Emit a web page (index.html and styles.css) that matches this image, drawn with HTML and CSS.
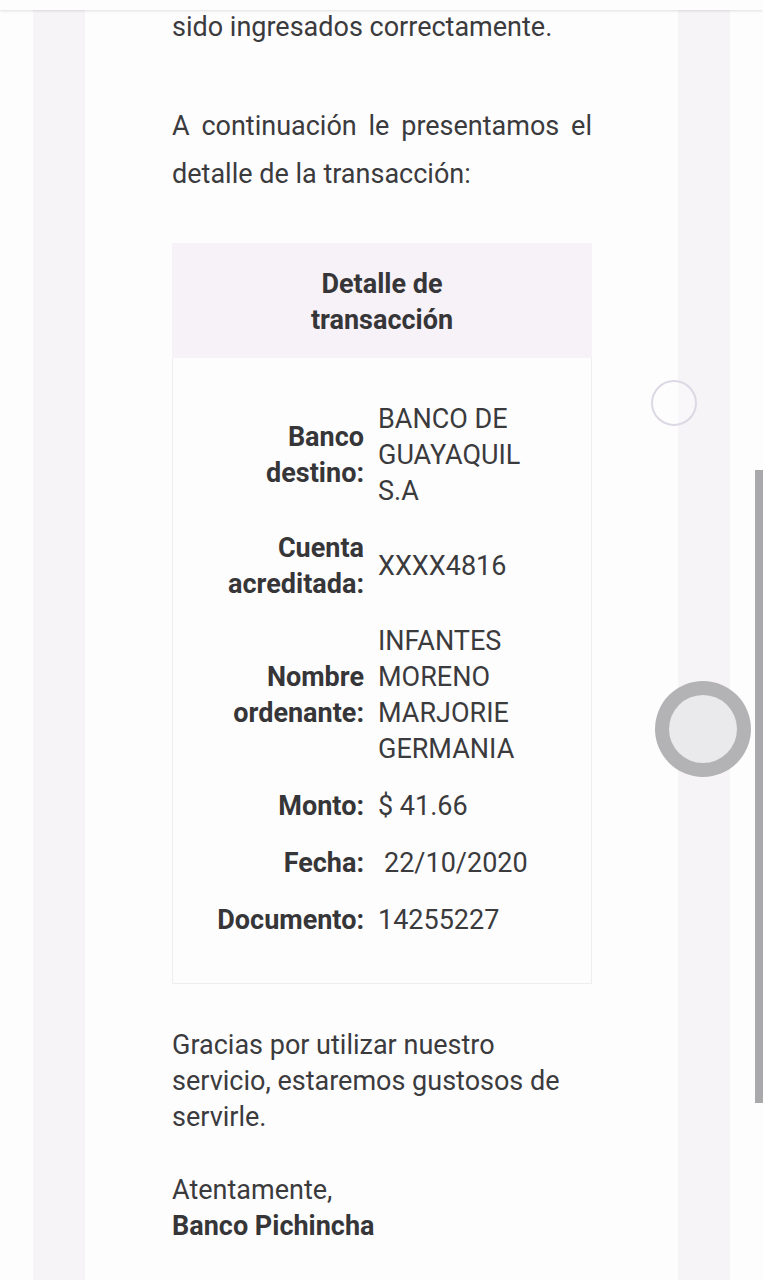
FILE: index.html
```html
<!DOCTYPE html>
<html lang="es">
<head>
<meta charset="utf-8">
<title>Detalle de transacción</title>
<link rel="stylesheet" href="styles.css">
</head>
<body>
<div class="topbar"></div>
<div class="outer">
  <div class="card">
    <p class="intro">sido ingresados correctamente.</p>
    <p class="lead">A continuación le presentamos el detalle de la transacción:</p>
    <div class="detail">
      <div class="detail-head">Detalle de<br>transacción</div>
      <div class="detail-body">
        <div class="row"><div class="lbl">Banco destino:</div><div class="val">BANCO DE GUAYAQUIL S.A</div></div>
        <div class="row"><div class="lbl">Cuenta acreditada:</div><div class="val">XXXX4816</div></div>
        <div class="row"><div class="lbl">Nombre ordenante:</div><div class="val">INFANTES MORENO MARJORIE GERMANIA</div></div>
        <div class="row"><div class="lbl">Monto:</div><div class="val">$ 41.66</div></div>
        <div class="row"><div class="lbl">Fecha:</div><div class="val shift">22/10/2020</div></div>
        <div class="row"><div class="lbl">Documento:</div><div class="val">14255227</div></div>
      </div>
    </div>
    <p class="thanks">Gracias por utilizar nuestro servicio, estaremos gustosos de servirle.</p>
    <p class="sign">Atentamente,<br><b>Banco Pichincha</b></p>
  </div>
</div>
<div class="ring-small"></div>
<div class="ring-big"><div class="ring-inner"></div></div>
<div class="scrollbar"></div>
</body>
</html>
```

FILE: styles.css
```css
html, body {
  margin: 0;
  padding: 0;
}
body {
  background: #fdfdfd;
  font-family: Roboto, "Liberation Sans", sans-serif;
  font-size: 27px;
  color: #3b3b3d;
  height: 1280px;
  overflow: hidden;
}
.topbar {
  position: fixed;
  top: 0;
  left: 0;
  right: 0;
  height: 10px;
  background: #fdfdfd;
  box-shadow: 0 1px 3px rgba(0, 0, 0, 0.12);
  z-index: 5;
}
.outer {
  margin: 0 33px;
  padding: 0 52px;
  background: #f7f4f8;
  min-height: 1280px;
}
.card {
  background: #fefdfe;
  padding: 3px 86px 40px 87px;
  min-height: 1280px;
  box-sizing: border-box;
}
p {
  margin: 0;
}
.intro {
  line-height: 48px;
}
.lead {
  margin-top: 51px;
  line-height: 48px;
  text-align: justify;
}
.detail {
  margin-top: 45px;
}
.detail-head {
  background: #f6f2f7;
  padding: 23px 0 20px;
  text-align: center;
  font-weight: 700;
  line-height: 36px;
  color: #363638;
}
.detail-body {
  border: 1px solid #efedf0;
  border-top: none;
  padding: 33px 0 34px;
}
.row {
  display: flex;
  align-items: center;
  gap: 14px;
  padding: 10px 0 11px;
  line-height: 36px;
}
.lbl {
  width: 160px;
  padding-left: 31px;
  flex: none;
  text-align: right;
  font-weight: 700;
  color: #363638;
}
.val {
  width: 172px;
  flex: none;
}
.val.shift {
  padding-left: 6px;
}
.thanks {
  margin-top: 43px;
  line-height: 36px;
}
.sign {
  margin-top: 37px;
  line-height: 36px;
}
.sign b {
  color: #363638;
}
.ring-small {
  position: absolute;
  left: 651px;
  top: 380px;
  width: 42px;
  height: 42px;
  border: 2px solid #dcd8e4;
  border-radius: 50%;
  background: rgba(255, 255, 255, 0.3);
}
.ring-big {
  position: absolute;
  left: 655px;
  top: 681px;
  width: 96px;
  height: 96px;
  border-radius: 50%;
  background: #b3b2b5;
  display: flex;
  align-items: center;
  justify-content: center;
}
.ring-inner {
  width: 68px;
  height: 68px;
  border-radius: 50%;
  background: #eae9eb;
}
.scrollbar {
  position: absolute;
  left: 755px;
  top: 470px;
  width: 8px;
  height: 633px;
  background: #a9a8ab;
}
```
